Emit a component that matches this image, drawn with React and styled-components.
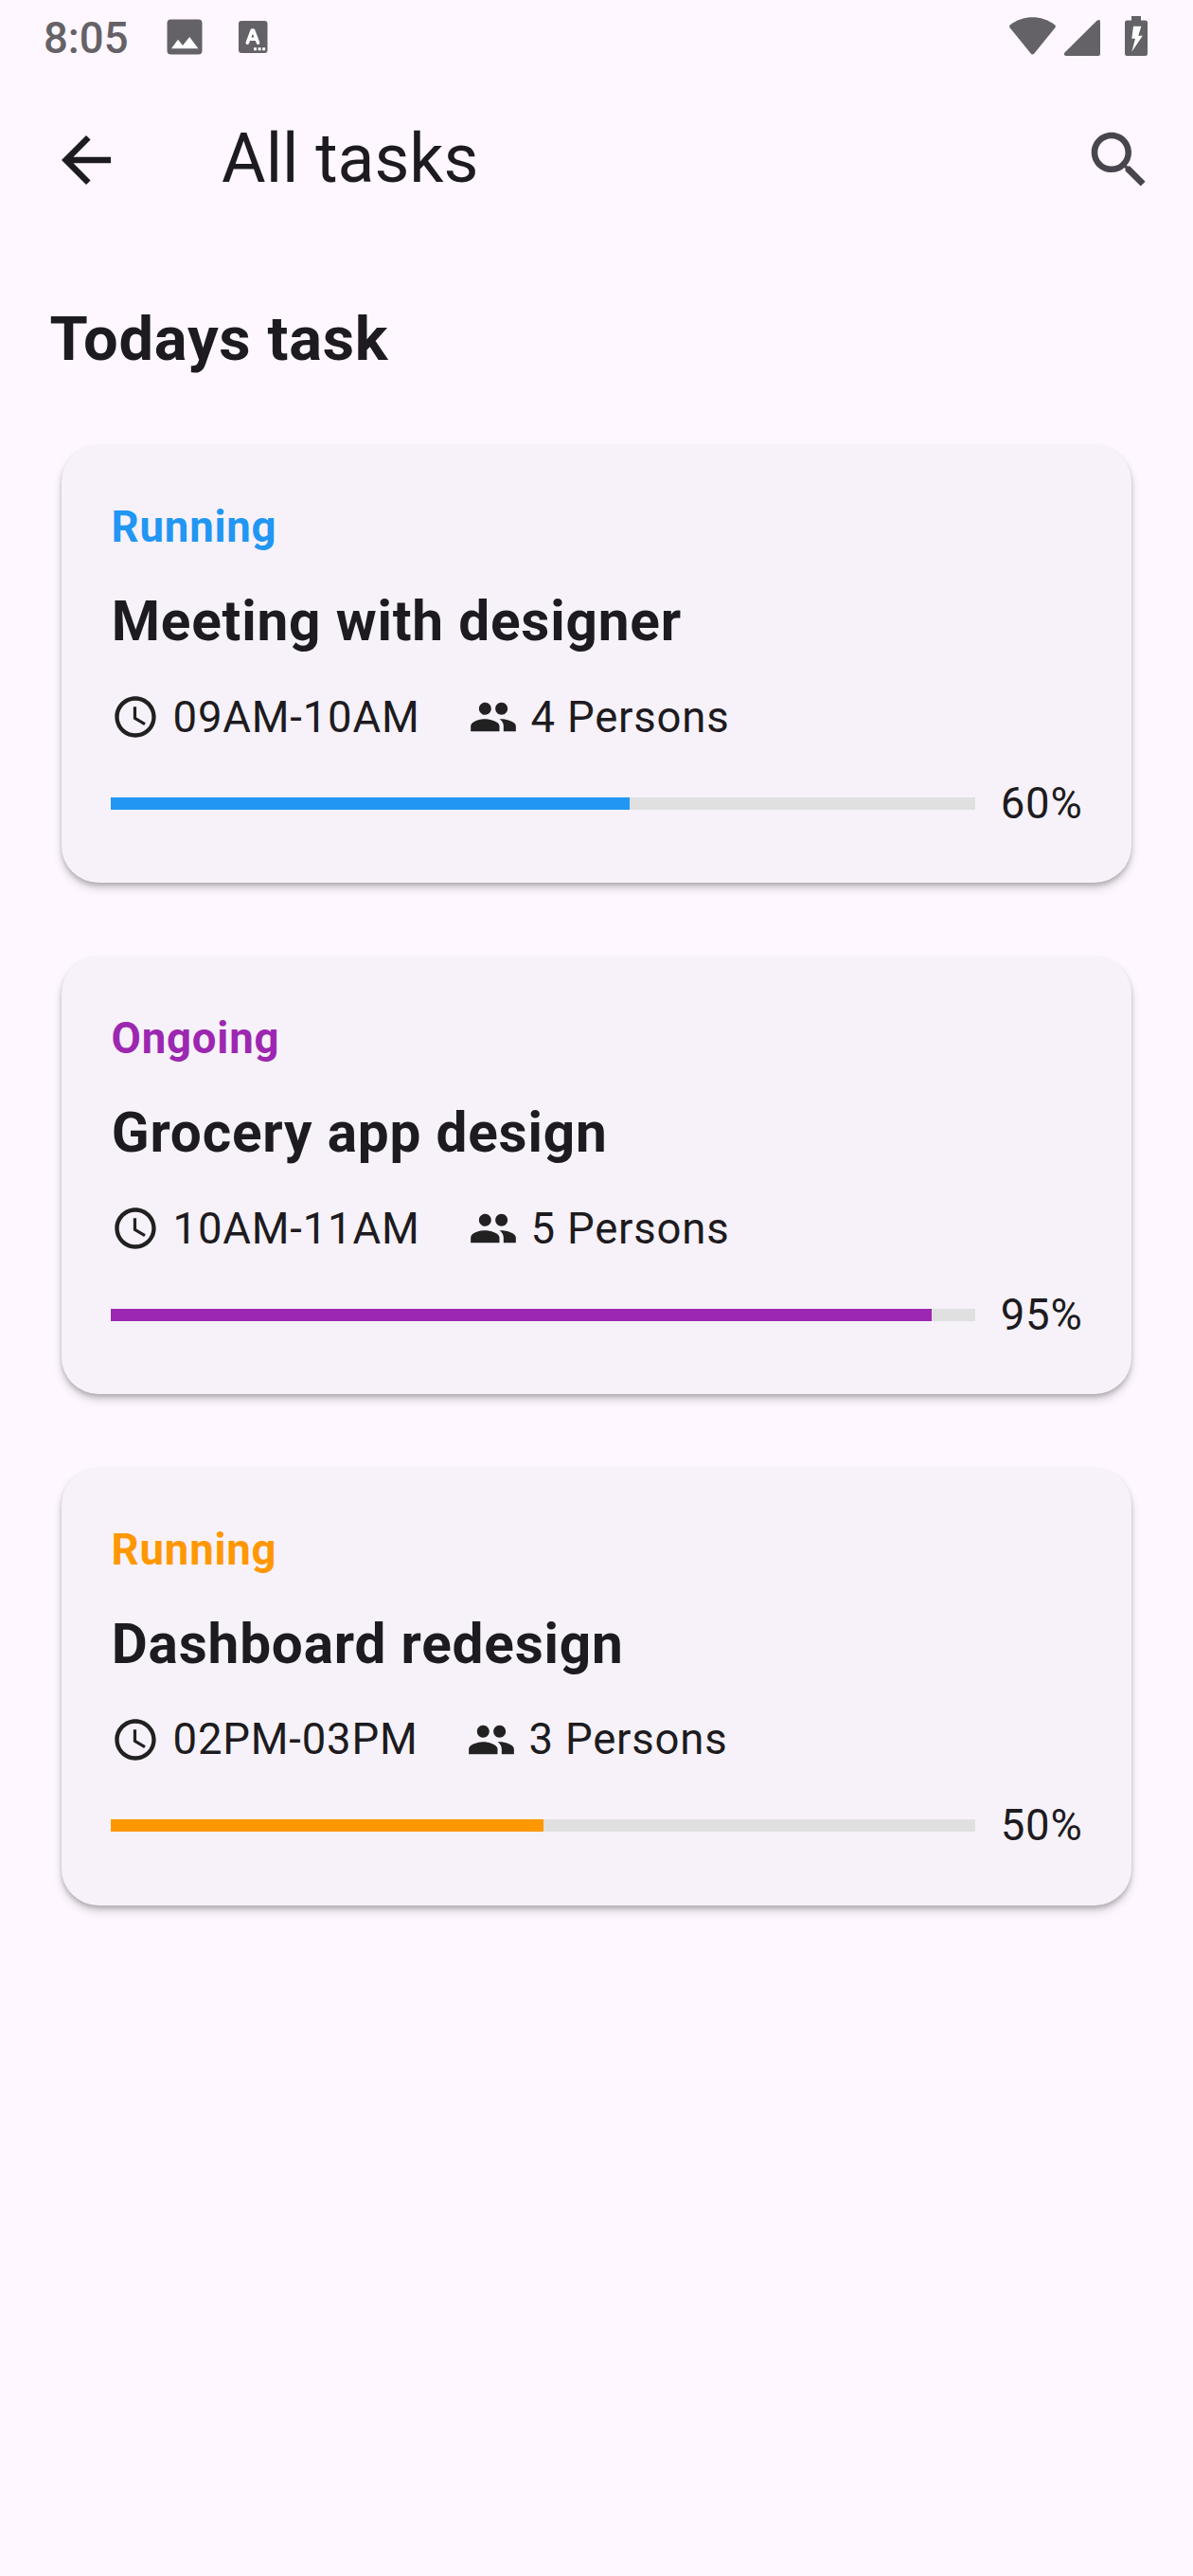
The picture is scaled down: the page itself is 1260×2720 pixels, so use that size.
import React from "react";
import styled, { createGlobalStyle } from "styled-components";

const GlobalStyle = createGlobalStyle`
  * { box-sizing: border-box; }
  body {
    margin: 0;
    background: #fef7ff;
    color: #1d1b20;
    font-family: Roboto, "Noto Sans", sans-serif;
  }
  svg { display: block; flex: none; }
`;

const Screen = styled.div`
  width: 1260px;
  height: 2720px;
  display: flex;
  flex-direction: column;
  background: #fef7ff;
`;

const StatusBar = styled.div`
  height: 78px;
  padding: 0 44px 0 46px;
  display: flex;
  justify-content: space-between;
  color: #656267;
`;

const StatusGroup = styled.div`
  display: flex;
  align-items: flex-start;
`;

const Clock = styled.span`
  width: 126px;
  margin-top: 14px;
  font-size: 45.5px;
  line-height: 54px;
  font-weight: 500;
`;

const AppBar = styled.header`
  height: 182px;
  padding: 0 39px 0 52px;
  display: flex;
  align-items: center;
`;

const AppTitle = styled.h1`
  flex: 1;
  margin: -3px 0 0 104px;
  font-size: 71.5px;
  line-height: 92px;
  font-weight: 400;
`;

const SectionTitle = styled.h2`
  margin: 52px 0 0 52.5px;
  font-size: 65px;
  line-height: 93px;
  font-weight: 700;
  letter-spacing: 0.75px;
`;

const CardList = styled.main`
  margin-top: 65.3px;
  padding: 0 65px;
  display: flex;
  flex-direction: column;
  gap: 78px;
`;

const Card = styled.article`
  height: 461.75px;
  padding: 54px 52px 0;
  border-radius: 39px;
  background: #f7f2fa;
  box-shadow: 0 3px 4px rgba(0, 0, 0, 0.17), 0 6px 10px rgba(0, 0, 0, 0.17);
`;

const Status = styled.div`
  padding-left: 0.6px;
  font-size: 45.5px;
  line-height: 65px;
  font-weight: 700;
  letter-spacing: 0.8px;
  color: ${(p) => p.$color};
`;

const TaskTitle = styled.h3`
  margin: 28px 0 0;
  padding-left: 0.8px;
  font-size: 58.5px;
  line-height: 78px;
  font-weight: 700;
  letter-spacing: 0.8px;
`;

const MetaRow = styled.div`
  margin-top: 29.6px;
  display: flex;
  gap: 51.4px;
`;

const Meta = styled.div`
  display: flex;
  align-items: center;
  gap: 13.6px;
  font-size: 45.5px;
  line-height: 65px;
  letter-spacing: 0.8px;
  svg { fill: #212121; }
`;

const ProgressRow = styled.div`
  margin-top: 26px;
  display: flex;
  align-items: center;
  gap: 26px;
`;

const Track = styled.div`
  flex: 1;
  height: 13px;
  background: #e0e0e0;
`;

const Fill = styled.div`
  height: 100%;
  background: ${(p) => p.$color};
`;

const Percent = styled.span`
  padding-left: 0.6px;
  margin-right: -0.6px;
  font-size: 45.5px;
  line-height: 65px;
  letter-spacing: 0.8px;
`;

const Icon = ({ size, d, color = "#1d1b20" }) => (
  <svg width={size} height={size} viewBox="0 0 24 24" fill={color}>
    <path d={d} />
  </svg>
);

const BACK = "M20 11H7.83l5.59-5.59L12 4l-8 8 8 8 1.41-1.41L7.83 13H20v-2z";
const SEARCH =
  "M15.5 14h-.79l-.28-.27C15.41 12.59 16 11.11 16 9.5 16 5.91 13.09 3 9.5 3S3 5.91 3 9.5 5.91 16 9.5 16c1.61 0 3.09-.59 4.23-1.57l.27.28v.79l5 4.99L20.49 19l-4.99-5zm-6 0C7.01 14 5 11.99 5 9.5S7.01 5 9.5 5 14 7.01 14 9.5 11.99 14 9.5 14z";
const TIME =
  "M11.99 2C6.47 2 2 6.48 2 12s4.47 10 9.99 10C17.52 22 22 17.52 22 12S17.52 2 11.99 2zM12 20c-4.42 0-8-3.58-8-8s3.58-8 8-8 8 3.58 8 8-3.58 8-8 8zm.5-13H11v6l5.25 3.15.75-1.23-4.5-2.67z";
const PEOPLE =
  "M16 11c1.66 0 2.99-1.34 2.99-3S17.66 5 16 5c-1.66 0-3 1.34-3 3s1.34 3 3 3zm-8 0c1.66 0 2.99-1.34 2.99-3S9.66 5 8 5C6.34 5 5 6.34 5 8s1.34 3 3 3zm0 2c-2.33 0-7 1.17-7 3.5V19h14v-2.5c0-2.33-4.67-3.5-7-3.5zm8 0c-.29 0-.62.02-.97.05 1.16.84 1.97 1.97 1.97 3.45V19h6v-2.5c0-2.33-4.67-3.5-7-3.5z";

const NoticeIcons = () => (
  <svg width="120" height="78" viewBox="172 0 120 78" fill="#656267">
    <rect x="176.5" y="20.5" width="37" height="37" rx="4" />
    <path d="M181 51.3L188 41.7L193 48L200.2 39L209.4 51.3Z" fill="#fff" />
    <rect x="252" y="22" width="30.5" height="34" rx="3" />
    <path
      d="M261.3 45.2L266.3 32H267.5L272.5 45.2M263.3 41.2H270.5"
      fill="none"
      stroke="#fff"
      strokeWidth="3.6"
      strokeLinecap="round"
      strokeLinejoin="round"
    />
    <path d="M268 50.3h3v3h-3zM272.6 50.3h3v3h-3zM277.1 50.3h3v3h-3z" fill="#fff" />
  </svg>
);

const SystemIcons = () => (
  <svg width="156" height="78" viewBox="1060 0 156 78" fill="#656267">
    <path d="M1066.6 29.2Q1065.4 27.6 1067 26.2C1081.5 15.6 1099.5 15.6 1114 26.2Q1115.7 27.6 1114.4 29.2L1092.3 56.4Q1090.5 58.4 1088.7 56.4Z" />
    <path d="M1124.5 55.5L1158.5 21.7Q1162 19.7 1162 23V57Q1162 59 1160 59H1126Q1122.5 58.5 1124.5 55.5Z" />
    <path d="M1195 17h10v4.5h4.5q2.5 0 2.5 2.5v32.5q0 2.5-2.5 2.5h-19q-2.5 0-2.5-2.5v-32.5q0-2.5 2.5-2.5h4.5z" />
    <path d="M1197 27.7H1205.3L1202.3 37.8H1206.8L1195.3 54.8L1199 40.8H1195.3Z" fill="#fff" />
  </svg>
);

const TASKS = [
  { status: "Running", title: "Meeting with designer", time: "09AM-10AM", people: 4, progress: 60, color: "#2196f3" },
  { status: "Ongoing", title: "Grocery app design", time: "10AM-11AM", people: 5, progress: 95, color: "#9c27b0" },
  { status: "Running", title: "Dashboard redesign", time: "02PM-03PM", people: 3, progress: 50, color: "#ff9800" },
];

const TaskCard = ({ task }) => (
  <Card>
    <Status $color={task.color}>{task.status}</Status>
    <TaskTitle>{task.title}</TaskTitle>
    <MetaRow>
      <Meta>
        <Icon size={52} d={TIME} />
        <span>{task.time}</span>
      </Meta>
      <Meta>
        <Icon size={52} d={PEOPLE} />
        <span>{task.people} Persons</span>
      </Meta>
    </MetaRow>
    <ProgressRow>
      <Track>
        <Fill $color={task.color} style={{ width: `${task.progress}%` }} />
      </Track>
      <Percent>{task.progress}%</Percent>
    </ProgressRow>
  </Card>
);

export default function App() {
  return (
    <Screen>
      <GlobalStyle />
      <StatusBar>
        <StatusGroup>
          <Clock>8:05</Clock>
          <NoticeIcons />
        </StatusGroup>
        <StatusGroup>
          <SystemIcons />
        </StatusGroup>
      </StatusBar>
      <AppBar>
        <Icon size={78} d={BACK} />
        <AppTitle>All tasks</AppTitle>
        <Icon size={78} d={SEARCH} color="#49454f" />
      </AppBar>
      <SectionTitle>Todays task</SectionTitle>
      <CardList>
        {TASKS.map((task) => (
          <TaskCard key={task.title} task={task} />
        ))}
      </CardList>
    </Screen>
  );
}
